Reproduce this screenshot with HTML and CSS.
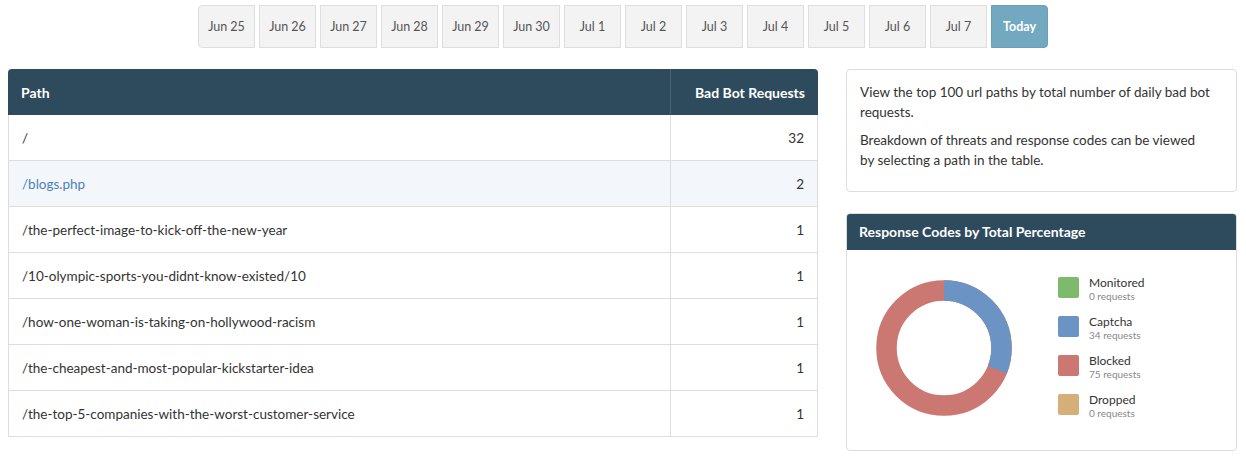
FILE: index.html
```html
<!DOCTYPE html>
<html>
<head>
<meta charset="utf-8">
<link rel="stylesheet" href="styles.css">
</head>
<body>
<nav class="dates">
  <button class="date">Jun 25</button>
  <button class="date">Jun 26</button>
  <button class="date">Jun 27</button>
  <button class="date">Jun 28</button>
  <button class="date">Jun 29</button>
  <button class="date">Jun 30</button>
  <button class="date">Jul 1</button>
  <button class="date">Jul 2</button>
  <button class="date">Jul 3</button>
  <button class="date">Jul 4</button>
  <button class="date">Jul 5</button>
  <button class="date">Jul 6</button>
  <button class="date">Jul 7</button>
  <button class="date active">Today</button>
</nav>
<main class="layout">
  <section class="table-wrap">
    <table class="paths">
      <thead>
        <tr><th class="col-path">Path</th><th class="col-num">Bad Bot Requests</th></tr>
      </thead>
      <tbody>
        <tr><td>/</td><td class="num">32</td></tr>
        <tr class="selected"><td><a class="link">/blogs.php</a></td><td class="num">2</td></tr>
        <tr><td>/the-perfect-image-to-kick-off-the-new-year</td><td class="num">1</td></tr>
        <tr><td>/10-olympic-sports-you-didnt-know-existed/10</td><td class="num">1</td></tr>
        <tr><td>/how-one-woman-is-taking-on-hollywood-racism</td><td class="num">1</td></tr>
        <tr><td>/the-cheapest-and-most-popular-kickstarter-idea</td><td class="num">1</td></tr>
        <tr><td>/the-top-5-companies-with-the-worst-customer-service</td><td class="num">1</td></tr>
      </tbody>
    </table>
  </section>
  <aside class="side">
    <div class="info">
      <p>View the top 100 url paths by total number of daily bad bot requests.</p>
      <p>Breakdown of threats and response codes can be viewed by selecting a path in the table.</p>
    </div>
    <div class="panel">
      <div class="panel-head">Response Codes by Total Percentage</div>
      <div class="panel-body">
        <svg class="donut" width="136" height="136" viewBox="0 0 136 136">
          <circle cx="68" cy="68" r="57.5" fill="none" stroke="#cc7872" stroke-width="20.5"/>
          <circle cx="68" cy="68" r="57.5" fill="none" stroke="#6b93c3" stroke-width="20.5"
            stroke-dasharray="112.3 400" transform="rotate(-90 68 68)"/>
        </svg>
        <ul class="legend">
          <li class="item"><span class="sw green"></span><span class="lbl"><span class="name">Monitored</span><span class="sub">0 requests</span></span></li>
          <li class="item"><span class="sw blue"></span><span class="lbl"><span class="name">Captcha</span><span class="sub">34 requests</span></span></li>
          <li class="item"><span class="sw red"></span><span class="lbl"><span class="name">Blocked</span><span class="sub">75 requests</span></span></li>
          <li class="item"><span class="sw tan"></span><span class="lbl"><span class="name">Dropped</span><span class="sub">0 requests</span></span></li>
        </ul>
      </div>
    </div>
  </aside>
</main>
</body>
</html>
```
FILE: styles.css
```css
* { box-sizing: border-box; }
body {
  margin: 0;
  font-family: Lato, "Liberation Sans", sans-serif;
  color: #333;
  background: #fff;
}
.dates {
  display: flex;
  justify-content: center;
  gap: 4px;
  padding-top: 5px;
}
.date {
  width: 57px;
  height: 43px;
  background: #f3f3f3;
  border: 1px solid #dedede;
  border-radius: 0;
  font-family: inherit;
  font-size: 12.5px;
  color: #555;
  padding: 0;
}
.date:first-child { border-radius: 4px 0 0 4px; }
.date.active {
  background: #73a9c0;
  border-color: #6aa0b8;
  color: #fff;
  font-weight: bold;
  border-radius: 0 4px 4px 0;
}
.layout {
  display: flex;
  gap: 28px;
  padding: 21px 9px 0 8px;
}
.table-wrap { width: 810px; flex: none; }
.paths {
  width: 100%;
  border-collapse: separate;
  border-spacing: 0;
  font-size: 13.5px;
}
.paths th {
  background: #2e4a5d;
  color: #fff;
  font-weight: bold;
  font-size: 14px;
  height: 46px;
  padding: 0 13px;
  text-align: left;
}
.paths th.col-path { border-top-left-radius: 4px; }
.paths th.col-num {
  text-align: right;
  width: 148px;
  border-left: 1px solid #4b6475;
  border-top-right-radius: 4px;
}
.paths td {
  height: 46px;
  padding: 0 13px;
  border-bottom: 1px solid #ddd;
  color: #333;
}
.paths td:first-child { border-left: 1px solid #ddd; }
.paths td.num {
  text-align: right;
  border-left: 1px solid #ddd;
  border-right: 1px solid #ddd;
}
.paths tr.selected td { background: #f3f7fb; }
.link { color: #4c80b6; }
.side {
  flex: 1;
  display: flex;
  flex-direction: column;
  gap: 21px;
}
.info {
  border: 1px solid #ddd;
  border-radius: 4px;
  padding: 12px 24px 3px 13px;
  font-size: 13.5px;
  line-height: 20px;
  height: 123px;
}
.info p { margin: 0 0 8px; }
.panel {
  border: 1px solid #ddd;
  border-radius: 4px;
  overflow: hidden;
  height: 238px;
  display: flex;
  flex-direction: column;
}
.panel-head {
  background: #2e4a5d;
  color: #fff;
  font-weight: bold;
  font-size: 14px;
  height: 37px;
  line-height: 37px;
  padding: 0 13px;
  margin: -1px -1px 0;
}
.panel-body {
  flex: 1;
  display: flex;
  align-items: center;
  padding: 0 0 4px 29px;
}
.donut { flex: none; }
.legend {
  list-style: none;
  margin: 2px 0 0 46px;
  padding: 0;
  display: flex;
  flex-direction: column;
  gap: 9px;
}
.item { display: flex; align-items: flex-start; gap: 10px; height: 30px; }
.sw { width: 21px; height: 21px; border-radius: 2px; flex: none; margin-top: 1px; }
.green { background: #7dba6b; }
.blue { background: #6b93c3; }
.red { background: #cc7872; }
.tan { background: #d5ae78; }
.lbl { display: flex; flex-direction: column; }
.name { font-size: 12px; line-height: 14px; color: #333; }
.sub { font-size: 10px; line-height: 13px; color: #888; }
```
